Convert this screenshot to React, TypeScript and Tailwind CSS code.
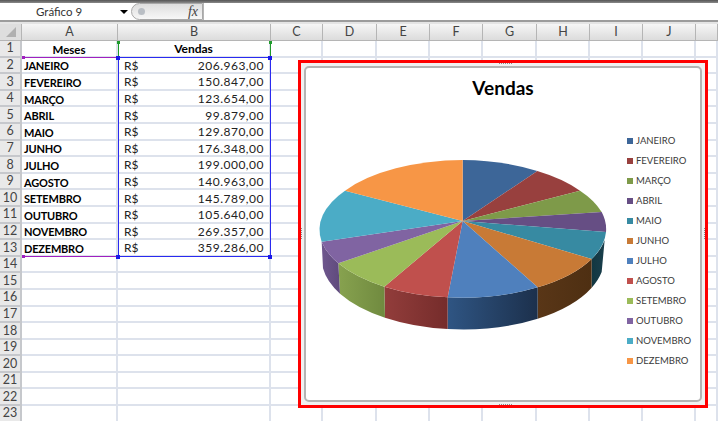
import React from 'react';

const colWidths = [96, 153, 52, 54, 53, 53, 54, 53, 53, 53, 22];
const colNames = ['A', 'B', 'C', 'D', 'E', 'F', 'G', 'H', 'I', 'J', ''];

const sales = [
  ['JANEIRO', '206.963,00', '#3d6698'],
  ['FEVEREIRO', '150.847,00', '#98403e'],
  ['MARÇO', '123.654,00', '#7e9a49'],
  ['ABRIL', '99.879,00', '#664e84'],
  ['MAIO', '129.870,00', '#378aa2'],
  ['JUNHO', '176.348,00', '#c87a36'],
  ['JULHO', '199.000,00', '#4f80bd'],
  ['AGOSTO', '140.963,00', '#c0504d'],
  ['SETEMBRO', '145.789,00', '#9bbb59'],
  ['OUTUBRO', '105.640,00', '#8064a2'],
  ['NOVEMBRO', '269.357,00', '#4bacc6'],
  ['DEZEMBRO', '359.286,00', '#f79646'],
];

// rim points of each slice, clockwise from 12 o'clock
const rim = [
  [458, 30], [682, 63], [810, 122], [875, 186], [888, 246], [845, 327],
  [683, 412], [413, 442], [223, 410], [85, 340], [35, 275], [105, 122], [458, 30],
];

const walls = [
  { id: 'mai', a: [884, 270], b: [845, 327], c: [845, 413], d: [875, 366], from: '#1a3f4c', to: '#123741' },
  { id: 'jun', a: [845, 327], b: [683, 412], c: [683, 506], d: [845, 413], from: '#4e2f12', to: '#593617' },
  { id: 'jul', a: [683, 412], b: [413, 442], c: [413, 537], d: [683, 506], from: '#1c304c', to: '#2f5583' },
  { id: 'ago', a: [413, 442], b: [223, 410], c: [225, 503], d: [413, 537], from: '#752c2b', to: '#923d3b' },
  { id: 'set', a: [223, 410], b: [85, 340], c: [90, 431], d: [225, 503], from: '#708a3f', to: '#87a24f' },
  { id: 'out', a: [85, 340], b: [35, 275], c: [39, 355], d: [90, 431], from: '#5f4a7c', to: '#6f578e' },
];

const PieChart = () => (
  <svg width="300" height="190" viewBox="0 0 900 570" className="mt-[19px] ml-[4px] shrink-0">
    <defs>
      {walls.map((w) => (
        <linearGradient key={w.id} id={w.id} x1="1" y1="0" x2="0" y2="0">
          <stop offset="0" stopColor={w.from} />
          <stop offset="1" stopColor={w.to} />
        </linearGradient>
      ))}
    </defs>
    {walls.map((w) => (
      <path
        key={w.id}
        fill={`url(#${w.id})`}
        d={`M${w.a} A430 206 0 0 1 ${w.b} L${w.c} A425 213 0 0 0 ${w.d} Z`}
      />
    ))}
    {sales.map((s, i) => (
      <path
        key={s[0]}
        fill={s[2]}
        d={`M458 213 L${rim[i]} A430 206 0 0 1 ${rim[i + 1]} Z`}
      />
    ))}
  </svg>
);

// coloured range outlines and their handles, drawn over the cells
const RangeMarks = () => (
  <svg width="280" height="262" className="absolute left-0 top-0 pointer-events-none">
    <g fill="none" strokeWidth="1">
      <path d="M23 57.5H118M23 256.5H118" stroke="#a020c0" />
      <path d="M118.5 41V57M270.5 41V57" stroke="#1f9a2c" />
      <rect x="118.5" y="57.5" width="152" height="199" stroke="#2a2af0" />
    </g>
    <path d="M22 56h3v3h-3zM22 255h3v3h-3z" fill="#a020c0" />
    <path d="M117 41h3v3h-3zM269 41h3v3h-3z" fill="#1f9a2c" />
    <path d="M116 56h4v4h-4zM268 56h4v4h-4zM116 255h4v4h-4zM268 255h4v4h-4z" fill="#1a1ae8" />
  </svg>
);

// resize dots on the edges of the chart frame
const FrameDots = () => (
  <svg width="404" height="342" className="absolute left-0 top-0 pointer-events-none">
    <path
      d="M198 .5h14M198 341.5h14"
      stroke="#8a8a8a"
      strokeDasharray="1 1"
    />
    <path d="M.5 165v12M403.5 165v12" stroke="#8a8a8a" strokeDasharray="1 1" />
  </svg>
);

const ChartFrame = () => (
  <div className="absolute left-[298px] top-[60px] w-[410px] h-[348px] border-[3px] border-[#ff0000] bg-[#f1f1f1] p-[3px]">
    <div className="h-full border-2 border-[#b4b4b4] rounded-[5px] bg-white">
      <div className="h-[63px] pt-[7px] text-center text-[19px] leading-[26px] font-bold text-black">Vendas</div>
      <div className="flex">
        <PieChart />
        <div className="ml-[17px] flex flex-col">
          {sales.map((s) => (
            <div key={s[0]} className="h-5 flex items-center gap-[3px] text-[9.5px] text-[#3a3a3a]">
              <span className="w-[6px] h-[6px]" style={{ background: s[2] }} />
              {s[0]}
            </div>
          ))}
        </div>
      </div>
    </div>
    <FrameDots />
  </div>
);

export default function App() {
  const rows = Array.from({ length: 23 }, (_, i) => i + 1);
  return (
    <div className="relative w-[718px] h-[421px] overflow-hidden bg-white text-black font-['Lato','Liberation_Sans',sans-serif]">
      <div className="h-[3px] bg-gradient-to-b from-[#555] to-[#8a8a8a]" />
      <div className="h-[19px] flex items-center border-b-2 border-[#9c9c9c]">
        <div className="w-[131px] h-full pl-[36px] flex items-center justify-between pr-[3px] pt-[1px] text-[11.5px] text-[#333]">
          Gráfico 9
          <span className="w-0 h-0 border-x-[4px] border-x-transparent border-t-[4px] border-t-black" />
        </div>
        <div className="w-[72px] h-full rounded-l-full border border-[#a8a8a8] bg-gradient-to-b from-[#dedede] to-[#f7f7f7] flex items-center justify-between pl-[6px] pr-[4px]">
          <span className="w-[7px] h-[7px] rounded-full bg-[#b9bec4]" />
          <span className="font-['Liberation_Serif',serif] italic text-[14px] leading-none text-[#444]">fx</span>
        </div>
        <div className="flex-1 h-full border-l border-[#b5b5b5]" />
      </div>
      <div className="h-[2px] bg-[#e4e4e4]" />
      <div className="flex h-[17px] text-[12.5px] text-[#444]">
        <div className="w-[22px] shrink-0 bg-[#dedede] border-r border-b border-[#b5b5b5] flex items-center justify-center">
          <span className="w-0 h-0 border-l-[10px] border-l-transparent border-b-[10px] border-b-[#b0b0b0]" />
        </div>
        {colNames.map((c, i) => (
          <div
            key={i}
            className="shrink-0 flex items-center justify-center pt-[1px] bg-gradient-to-b from-[#f6f6f6] to-[#dcdcdc] border-r border-b border-[#b5b5b5]"
            style={{ width: colWidths[i] }}
          >
            {c}
          </div>
        ))}
      </div>
      {rows.map((r) => {
        const sale = r >= 2 && r <= 13 ? sales[r - 2] : null;
        return (
          <div key={r} className="flex h-[16.6px]">
            <div className="w-[22px] shrink-0 flex items-center justify-center pt-[1px] bg-[#e9e9e9] border-r-2 border-b-2 border-[#c6c8cc] text-[12.5px] text-[#444]">
              {r}
            </div>
            {colWidths.map((w, i) => (
              <div
                key={i}
                className="shrink-0 flex items-center justify-between pt-[2px] border-r-2 border-b-2 border-[#dde2ec] leading-none"
                style={{ width: w }}
              >
                {r === 1 && i === 0 && <span className="w-full text-center font-bold text-[11.5px]">Meses</span>}
                {r === 1 && i === 1 && <span className="w-full text-center font-bold text-[12px]">Vendas</span>}
                {sale && i === 0 && <span className="pl-[2px] font-bold text-[11px] tracking-[-0.2px]">{sale[0]}</span>}
                {sale && i === 1 && (
                  <>
                    <span className="pl-[6px] text-[12px] text-[#222]">R$</span>
                    <span className="pr-[5px] text-[12px] tracking-[0.5px] text-[#222]">{sale[1]}</span>
                  </>
                )}
              </div>
            ))}
          </div>
        );
      })}
      <RangeMarks />
      <ChartFrame />
    </div>
  );
}
